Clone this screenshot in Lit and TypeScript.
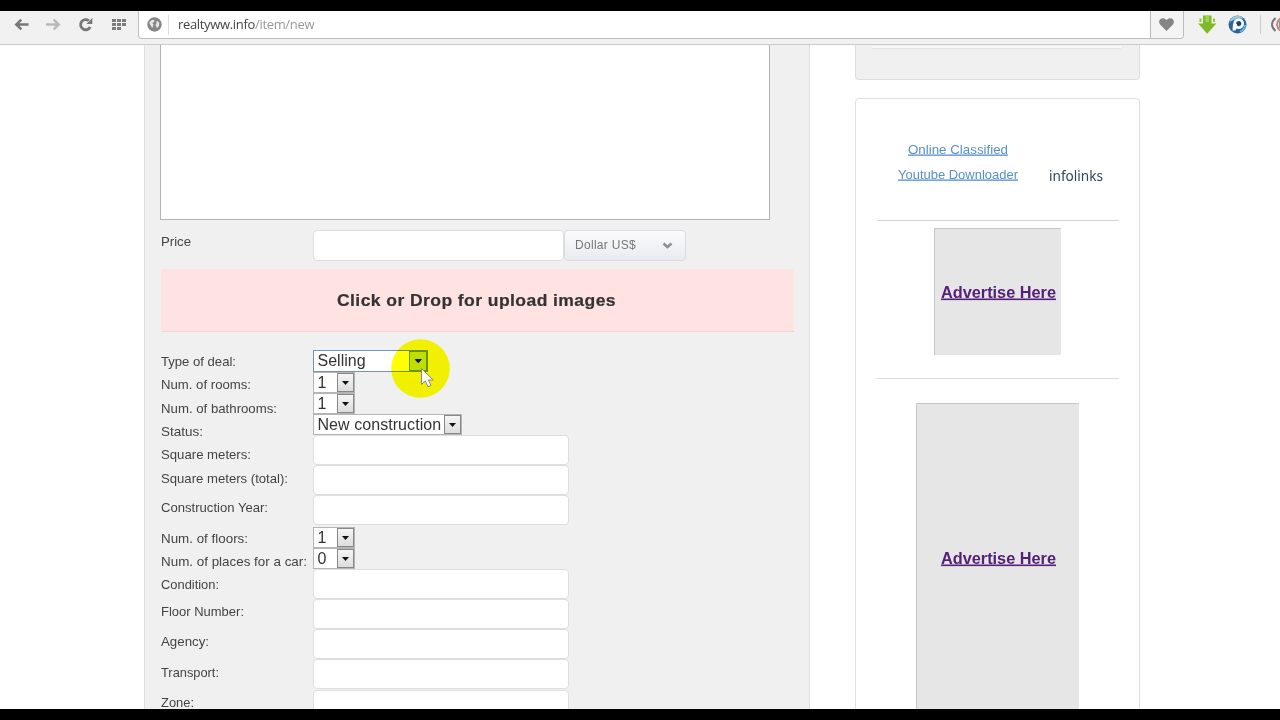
import { LitElement, html, css, svg } from "lit";
import { customElement } from "lit/decorators.js";

const LABELS: [string, number][] = [
  ["Type of deal:", 75], ["Num. of rooms:", 90], ["Num. of bathrooms:", 116], ["Status:", 42],
  ["Square meters:", 90], ["Square meters (total):", 127], ["Construction Year:", 107],
  ["Num. of floors:", 87], ["Num. of places for a car:", 146], ["Condition:", 58],
  ["Floor Number:", 83], ["Agency:", 48], ["Transport:", 58], ["Zone:", 33],
];

type Field = { kind: "select" | "input"; value?: string; cls?: string };
const FIELDS: Field[] = [
  { kind: "select", value: "Selling", cls: "deal" },
  { kind: "select", value: "1", cls: "small" },
  { kind: "select", value: "1", cls: "small" },
  { kind: "select", value: "New construction", cls: "status" },
  { kind: "input" }, { kind: "input" }, { kind: "input" },
  { kind: "select", value: "1", cls: "small" },
  { kind: "select", value: "0", cls: "small" },
  { kind: "input" }, { kind: "input" }, { kind: "input" }, { kind: "input" }, { kind: "input" },
];

@customElement("app-root")
export class AppRoot extends LitElement {
  static styles = css`
    :host { display: flex; flex-direction: column; width: 1280px; height: 720px; overflow: hidden;
      position: relative; background: #000; box-sizing: border-box; padding: 11px 0;
      font-family: "Liberation Sans", Arial, sans-serif; font-size: 13px; color: #444; }
    * { box-sizing: border-box; }
    svg { display: block; flex: none; }
    .toolbar { height: 34px; flex: none; background: #f1f1f1; border-bottom: 1px solid #cbcbcb; display: flex; align-items: flex-start; }
    .nav { width: 138px; height: 28px; flex: none; }
    .address { width: 1046px; height: 28px; flex: none; background: #fff; border: 1px solid #bdbdbd; border-top: 0; border-radius: 0 0 4px 4px; display: flex; align-items: center; padding-left: 8px; overflow: hidden; }
    .sep { width: 1px; height: 20px; background: #ddd; margin: 0 8px 0 6px; }
    .url { font: 13px/18px "Open Sans", sans-serif; letter-spacing: -0.33px; color: #999; flex: 1; white-space: nowrap; padding: 0 0 1px 1px; }
    .host { color: #444; }
    .heart { width: 33px; height: 28px; border-left: 1px solid #b8b8b8; background: #f4f4f5; }
    .ext { width: 96px; height: 28px; flex: none; }
    .page { flex: 1; min-height: 0; background: #fff; display: flex; align-items: flex-start; padding-left: 144px; overflow: hidden; }
    .panel { width: 666px; height: 664px; flex: none; background: #f0f0f0; border: solid #dedede; border-width: 0 1px; padding-left: 15px; overflow: hidden; }
    .area { width: 610px; height: 175px; background: #fff; border: 1px solid #b2b2b2; border-top: 0; }
    .price { display: flex; margin-top: 10px; height: 39px; padding-left: 0.5px; }
    .price-label { width: 152.5px; padding-top: 1px; }
    .input { width: 256px; height: 30px; background: #fff; border: 1px solid #dedede; border-radius: 4px; }
    .amount { width: 251px; height: 31px; }
    .currency { width: 122px; height: 31px; border: 1px solid #d9dce2; border-radius: 4px; background: linear-gradient(#fbfbfc, #e9ebf0); display: flex; align-items: center; justify-content: space-between; padding: 0 11px 1px 10px; font-size: 12px; letter-spacing: 0.3px; color: #777; }
    .drop { width: 633px; height: 63px; margin-left: 1px; background: #ffe2e2; border-bottom: 1px solid #ead6d6; }
    .form { display: flex; padding-left: 0.5px; margin-top: 18px; }
    .labels { width: 152.5px; display: grid; padding-top: 1px; grid-template-rows: 23px 23.5px 23px 23.5px 23.5px 29.5px 30.5px 23px 23.5px 26.5px 30.5px 30.5px 30px 20px; align-content: start; }
    .fields { display: grid; grid-template-rows: 22px 21px 21px 21px 30px 30px 32px 21px 21px 30px 30px 30px 31px 30px; align-content: start; }
    .select { height: 21px; background: #fff; border: 1px solid #b5b5b5; display: flex; justify-content: space-between; align-items: stretch; padding-left: 4px; font-size: 16px; line-height: 19px; color: #333; }
    .value { margin-left: -0.5px; white-space: nowrap; }
    .small { width: 42px; }
    .deal { width: 115px; height: 22px; border-color: #6f91cc; line-height: 20px; }
    .status { width: 149px; letter-spacing: 0.06px; }
    .arrow { width: 17px; border: 1px solid #888; background: linear-gradient(#f5f5f5, #ddd); display: flex; align-items: center; justify-content: center; }
    .deal .arrow { width: 18px; border: 1px solid #5f9560; background: #c0de60; }
    .side { width: 285px; margin-left: 45px; flex: none; }
    .stub { height: 35px; background: #f0f0f0; border: 1px solid #dedede; border-top: 0; border-radius: 0 0 4px 4px; padding: 1px 18px 0 16px; }
    .stub-line { height: 3px; background: #fafafa; border-bottom: 1px solid #e4e4e4; }
    .card { height: 640px; margin-top: 18px; border: 1px solid #dfdfdf; border-radius: 4px; padding: 0 20px 0 21px; display: flex; flex-direction: column; align-items: center; }
    .links { height: 122px; align-self: stretch; border-bottom: 1px solid #d4d4d4; display: flex; padding: 39.5px 0 0 20.5px; }
    .list { width: 120px; display: flex; flex-direction: column; align-items: center; gap: 5.5px; }
    .info { margin-left: 31.5px; padding-top: 27px; }
    .ad { position: relative; left: -1px; background: #e6e6e6; border: solid #c6c6c6; border-width: 1px 0 0 1px; display: flex; align-items: center; justify-content: center; }
    .square { width: 127px; height: 127px; margin-top: 7px; padding: 1px 0 0 1px; }
    .rule { align-self: stretch; height: 1px; flex: none; background: #dcdcdc; margin: 23px 0 24px; }
    .tall { width: 163px; height: 310px; flex: none; padding-left: 1px; }
    .glow { position: absolute; left: 391px; top: 338px; mix-blend-mode: multiply; }
    .pointer { position: absolute; left: 391px; top: 338px; }
    text { font-family: "Liberation Sans", Arial, sans-serif; }
    .logo { font-family: "Noto Sans", sans-serif; }
    .u { text-decoration: underline; }
  `;

  /** A single line of text fitted to a fixed advance width. */
  private fit(text: string, w: number, size: number, color: string, opts: { bold?: boolean; cls?: string } = {}) {
    return html`<svg width=${w} height="20" overflow="visible">${svg`<text x="0" y="14.5" textLength=${w} lengthAdjust="spacingAndGlyphs"
      font-size=${size} fill=${color} font-weight=${opts.bold ? "bold" : "normal"} class=${opts.cls ?? ""}>${text}</text>`}</svg>`;
  }

  private field(f: Field) {
    if (f.kind === "input") return html`<div class="input"></div>`;
    return html`<div class="select ${f.cls}"><span class="value">${f.value}</span><span class="arrow">
      <svg width="7" height="4"><path d="M0 0H7L3.5 4Z" fill=${f.cls === "deal" ? "#0c1290" : "#111"} /></svg></span></div>`;
  }

  render() {
    return html`
      <div class="toolbar">
        <svg class="nav" viewBox="0 0 138 28">
          <path d="M28.5 13.5H17M21.3 8.6L16.3 13.5L21.3 18.4" fill="none" stroke="#777" stroke-width="2.5" />
          <path d="M46 13.5H57.5M53.7 8.6L58.7 13.5L53.7 18.4" fill="none" stroke="#b9b9b9" stroke-width="2.5" />
          <path d="M90.2 16A5.1 5.1 0 1 1 88.8 9.6" fill="none" stroke="#777" stroke-width="2.8" />
          <path d="M92.3 7V13H86.3Z" fill="#777" />
          ${[0, 1, 2].map((r) => [0, 1, 2].map((c) => r === 2 && c === 2 ? "" : svg`<rect x=${112 + c * 5} y=${8 + r * 4} width="4" height="3" fill="#7c7c7c" />`))}
        </svg>
        <div class="address">
          <svg width="15" height="15" viewBox="0 0 15 15"><circle cx="7.5" cy="7.5" r="7.2" fill="#858585" />
            <path d="M2.5 4.8L5.5 2.8L7.6 3.2L7 5L5.3 6L6.5 7.5L6.1 9.5L5 11.2L4.2 9L2.6 7Z M9.8 3.6L12.2 5.6L12.1 8.8L9.8 11.4L9.4 9.6L8.4 8.4L9.4 6.3Z" fill="#e4e4e4" /></svg>
          <span class="sep"></span>
          <span class="url"><span class="host">realtyww.info</span>/item/new</span>
          <svg class="heart" viewBox="0 0 33 28"><path d="M16 20.3L9.6 13.8C6 9 11.6 4.2 16 8.8C20.4 4.2 26 9 22.4 13.8Z" fill="#858585" /></svg>
        </div>
        <svg class="ext" viewBox="0 0 96 28">
          <path d="M19 4.5H27.5V12.5H32.3L23.2 22.7L14 12.5H19Z" fill="#7db928" />
          <path d="M15.5 7.5H17.5V11H15.5Z M29 7.5H31V11H29Z" fill="#8fca38" />
          <path d="M21.5 4.5H25V11H21.5Z" fill="#a2d456" />
          <circle cx="53.5" cy="13.5" r="9" fill="#2c659c" /><path d="M45.5 11A8.5 8.5 0 0 1 60 7.5L53 7.5Z" fill="#9bc6e2" />
          <circle cx="54.7" cy="12.6" r="4" fill="none" stroke="#f4f8fc" stroke-width="2.8" /><circle cx="55" cy="12.5" r="2" fill="#203c60" />
          <path d="M49 13H53V16L51.5 19.5H48.5Z" fill="#f4f8fc" /><path d="M56 20.5Q60.5 19 61.3 14" fill="none" stroke="#67b4e6" stroke-width="1.8" />
          <path d="M76.5 4V22.5" stroke="#c9c9c9" />
          <path d="M91.5 7Q84.5 13.5 91.5 20" fill="none" stroke="#777" stroke-width="2" />
          <path d="M96 7.5Q90 13.5 96 19.5" fill="none" stroke="#d97979" stroke-width="2" />
          <path d="M95.5 10V17" stroke="#45b6a0" />
        </svg>
      </div>
      <div class="page">
        <div class="panel">
          <div class="area"></div>
          <div class="price">
            <div class="price-label">${this.fit("Price", 30, 13, "#444")}</div>
            <div class="input amount"></div>
            <div class="currency"><span>Dollar US$</span>
              <svg width="13" height="9"><path d="M2.5 2.5L6.5 6L10.5 2.5" fill="none" stroke="#8b8f98" stroke-width="2.6" /></svg></div>
          </div>
          <div class="drop"><svg width="633" height="62">${svg`<text x="176" y="37" textLength="279" lengthAdjust="spacingAndGlyphs" font-size="16.5" font-weight="bold" fill="#333" stroke="#333" stroke-width="0.2" letter-spacing="0.4">Click or Drop for upload images</text>`}</svg></div>
          <div class="form">
            <div class="labels">${LABELS.map(([t, w]) => this.fit(t, w, 13, "#444"))}</div>
            <div class="fields">${FIELDS.map((f) => this.field(f))}</div>
          </div>
        </div>
        <div class="side">
          <div class="stub"><div class="stub-line"></div></div>
          <div class="card">
            <div class="links">
              <div class="list">${this.fit("Online Classified", 100, 13, "#5590cc", { cls: "u" })}${this.fit("Youtube Downloader", 120, 13, "#5590cc", { cls: "u" })}</div>
              <div class="info">${this.fit("infolinks", 54, 15, "#2f465c", { cls: "logo" })}</div>
            </div>
            <div class="ad square">${this.fit("Advertise Here", 115, 16, "#54207a", { bold: true, cls: "u" })}</div>
            <div class="rule"></div>
            <div class="ad tall">${this.fit("Advertise Here", 115, 16, "#54207a", { bold: true, cls: "u" })}</div>
          </div>
        </div>
      </div>
      <svg class="glow" width="60" height="60"><circle cx="29.5" cy="30.5" r="29.3" fill="#ffff00" /></svg>
      <svg class="pointer" width="60" height="60">
        <path d="M23.5 21.2H30.5L27 25Z" fill="#0c1290" />
        <path d="M30.5 30.5V46.5L34.3 43L37 48.8L40 47.5L37.4 42H42.2Z" fill="#fff" stroke="#8a8a80" />
      </svg>`;
  }
}
